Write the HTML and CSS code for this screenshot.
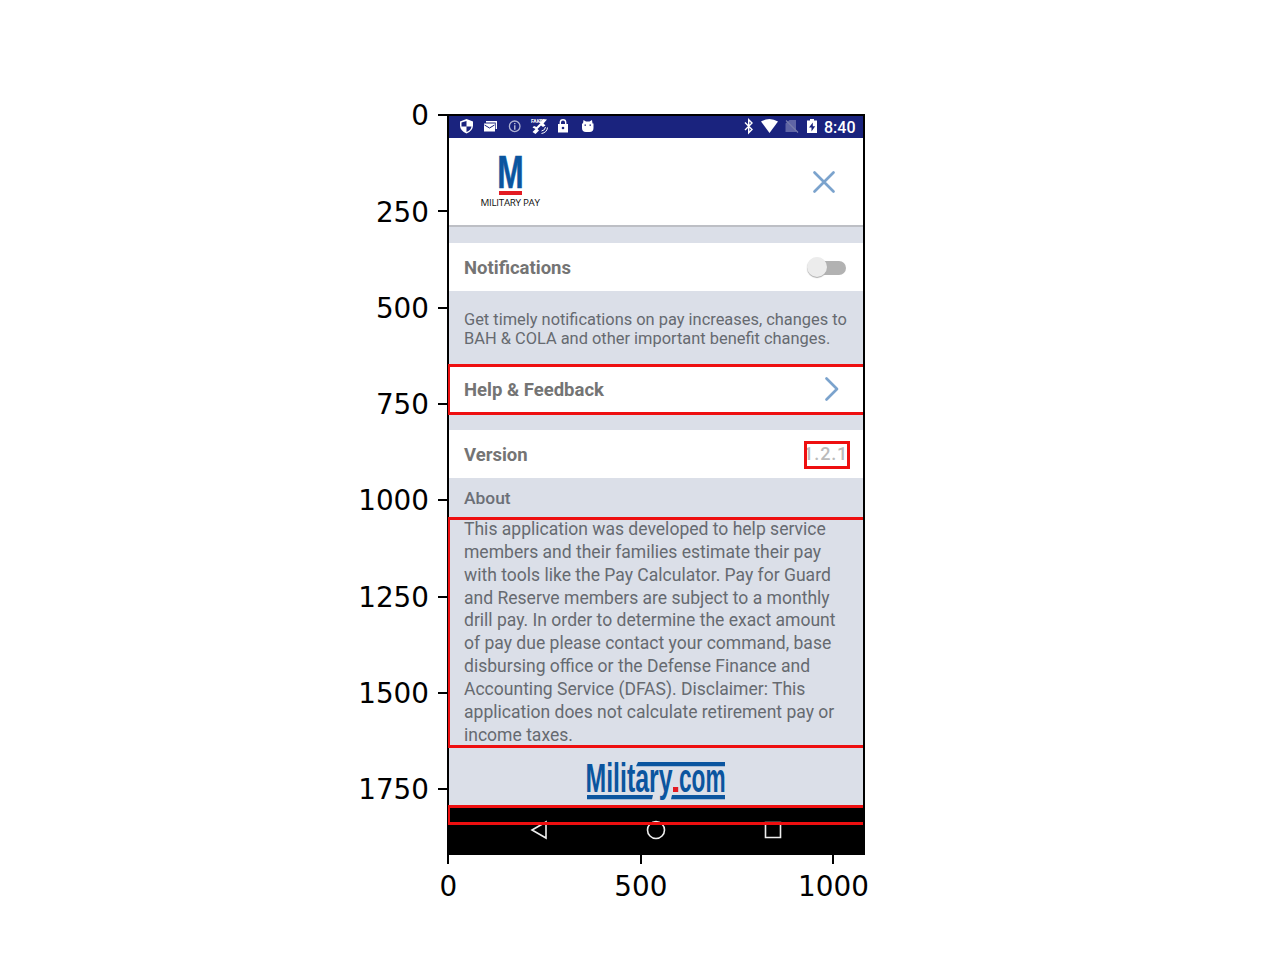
FILE: index.html
```html
<!DOCTYPE html>
<html lang="en">
<head>
<meta charset="utf-8">
<title>Military Pay</title>
<link rel="stylesheet" href="styles.css">
</head>
<body>
<main class="figure">
  <div class="plot">
    <div class="y-axis">
      <div class="y-tick"><span>0</span></div><div class="y-tick"><span>250</span></div><div class="y-tick"><span>500</span></div><div class="y-tick"><span>750</span></div><div class="y-tick"><span>1000</span></div><div class="y-tick"><span>1250</span></div><div class="y-tick"><span>1500</span></div><div class="y-tick"><span>1750</span></div>
    </div>
    <div class="phone">
      <div class="status">
        <svg width="150" height="22" viewBox="449 116 150 22" fill="#fff">
          <path d="M466.500 119l6.500 2.500v4q0 5-6.500 8-6.500-3-6.500-8v-4z"/>
          <path d="M466.500 121v5.500h-5v-4zM466.500 126.500h5q-.5 3.500-5 5.500z" fill="#1a237e"/>
          <path d="M486 121h11v8h-1.300v-6.500H486zM484 123.500h11v8h-11z"/>
          <path d="M484.500 125l5 3 5-3" fill="none" stroke="#1a237e"/>
          <g opacity=".65"><circle cx="514.700" cy="126.300" r="5.300" fill="none" stroke="#fff" stroke-width="1.300"/><path d="M514 123h1.500v1.300H514zM514 125.300h1.500v4.400H514z"/></g>
          <text class="fake" x="531" y="122.500">FAKE</text>
          <path d="M541 121.500l2-2.500 4 .5-3.500 4 2 2-2.500 1.500-2-1.500-3.500 3.500 1.500 1.500-3.500 3.500-3-2 3-3-3-1.500 1.500-1.500 2.500 1 4-4-2-1.500z"/>
          <path d="M541.500 131q3.500-.5 4-4M541.500 133.500q5.500-1 6-6" fill="none" stroke="#fff" stroke-width="1"/>
          <path d="M558 124h10v8.500h-10z"/><path d="M560.300 124v-1.500a2.700 2.700 0 0 1 5.400 0v1.500" fill="none" stroke="#fff" stroke-width="1.400"/><circle cx="563" cy="128" r="1.300" fill="#1a237e"/>
          <path d="M582 123.500h1l.5-3.500 2.500 1.500h3.500l2.500-1.500.500 3.500h1v4.500q0 4-4 4h-3.500q-4 0-4-4z"/><path d="M584.500 124.500h1.500v1.300h-1.500zM589.500 124.500h1.500v1.300h-1.500z" fill="#1a237e"/>
        </svg>
        <svg width="120" height="22" viewBox="743 116 120 22" fill="#fff">
          <path d="M745 122.500l7 7-3.300 3.300v-13l3.300 3.300-7 7" fill="none" stroke="#fff" stroke-width="1.400"/>
          <path d="M761 121.500q8.500-5 17 0L769.500 133z"/>
          <path d="M785.500 132v-8.500l4-3.500h6.500v12z" opacity=".3"/><path d="M786 120.500l12 12" stroke="#777cac" stroke-width="1.200"/>
          <path d="M807 120.500h3V119h4v1.500h3v12.500h-10z"/><path d="M812.800 122.500l-3.800 5h2.500v4l3.700-5.200h-2.400z" fill="#1a237e"/>
          <text class="clock" x="824" y="132.500" textLength="31.500">8:40</text>
        </svg>
      </div>
      <header class="head">
        <svg class="logo" width="62" height="56" viewBox="480 154 62 56">
          <text class="big-m" x="497.300" y="188" textLength="26.400" lengthAdjust="spacingAndGlyphs">M</text>
          <path d="M499 191h23v4h-23z" fill="#e31b23"/>
          <text class="logo-name" x="480.500" y="206" textLength="59.500">MILITARY PAY</text>
        </svg>
        <svg class="close" width="26" height="26" viewBox="0 0 26 26"><path d="M3.500 3.500l19 19M22.500 3.500l-19 19" class="stroke-blue"/></svg>
      </header>
      <section class="row">
        <span class="label">Notifications</span>
        <span class="switch"><i class="knob"></i></span>
      </section>
      <p class="hint">Get timely notifications on pay increases, changes to<br>BAH &amp; COLA and other important benefit changes.</p>
      <section class="row help">
        <span class="label">Help &amp; Feedback</span>
        <svg class="chev" width="16" height="26" viewBox="0 0 16 26"><path d="M2.500 2.500l10.500 10.500-10.500 10.500" class="stroke-blue"/></svg>
      </section>
      <section class="row version">
        <span class="label">Version</span>
        <span class="number">1.2.1</span>
      </section>
      <h2 class="about">About</h2>
      <p class="copy">This application was developed to help service<br>members and their families estimate their pay<br>with tools like the Pay Calculator. Pay for Guard<br>and Reserve members are subject to a monthly<br>drill pay. In order to determine the exact amount<br>of pay due please contact your command, base<br>disbursing office or the Defense Finance and<br>Accounting Service (DFAS). Disclaimer: This<br>application does not calculate retirement pay or<br>income taxes.</p>
      <div class="brand">
        <svg class="logo" width="140" height="40" viewBox="586 760 140 40" fill="#0b559f">
          <path d="M638 762h87v4.200h-89zM587 795h66l-1 4.200h-65zM672 795h53v4.200h-54z"/>
          <text class="brand-text" x="585.500" y="791.500" textLength="87" lengthAdjust="spacingAndGlyphs">Military</text>
          <path d="M673 787h5.200v5H673z" fill="#e31b23"/>
          <text class="brand-text" x="679" y="791.500" textLength="46.500" lengthAdjust="spacingAndGlyphs">com</text>
        </svg>
      </div>
      <nav class="nav">
        <svg width="20" height="20" viewBox="0 0 20 20"><path d="M17 2v16L3 10z"/></svg>
        <svg width="20" height="20" viewBox="0 0 20 20"><circle cx="10" cy="10" r="8.500"/></svg>
        <svg width="20" height="20" viewBox="0 0 20 20"><path d="M2.500 2.500h15v15h-15z"/></svg>
      </nav>
      <i class="box box-help"></i><i class="box box-version"></i><i class="box box-copy"></i><i class="box box-nav"></i>
    </div>
  </div>
  <div class="x-axis"><div class="x-tick">0</div><div class="x-tick">500</div><div class="x-tick">1000</div></div>
</main>
</body>
</html>
```
FILE: styles.css
```css
* { box-sizing: border-box; }
body { margin: 0; background: #fff; font-family: Roboto, sans-serif; }
svg { display: block; flex: none; }
.figure { width: 1280px; height: 960px; overflow: hidden; }
.plot { display: flex; height: 855px; }
.y-axis { width: 447px; padding-top: 67px; flex: none; }
.y-tick { height: 96.3px; display: flex; align-items: center; justify-content: flex-end; gap: 9px; font: 27.8px/1 "DejaVu Sans", sans-serif; }
.y-tick span { padding-top: 2px; }
.y-tick::after { content: ""; width: 9px; height: 2px; background: #000; }
.phone { position: relative; width: 418px; height: 741px; margin-top: 114px; border: 2px solid #000; background: #dbdfe8; display: flex; flex-direction: column; }
.status { height: 22px; background: #1a237e; display: flex; justify-content: space-between; flex: none; }
.fake { font: bold 5px Roboto, sans-serif; }
.clock { font: 500 16px Roboto, sans-serif; }
.head { height: 89px; flex: none; background: #fff; border-bottom: 2px solid #bdbfc5; padding: 16px 26px 0 31px; display: flex; justify-content: space-between; }
.logo { overflow: visible; }
.close { margin-top: 15px; }
.big-m { font: bold 46.500px "Liberation Sans", sans-serif; fill: #0b559f; stroke: #0b559f; stroke-width: .6; }
.logo-name { font: 9.800px "Open Sans", sans-serif; fill: #111; }
.brand-text { font: bold 41px "Liberation Sans", sans-serif; }
.stroke-blue { fill: none; stroke: #7ba3cd; stroke-width: 2.700; stroke-linecap: round; stroke-linejoin: round; }
.row { height: 48px; margin-top: 16px; flex: none; background: #fff; padding: 0 17px 0 15px; display: flex; align-items: center; justify-content: space-between; }
.label { font-size: 18.500px; font-weight: 700; color: #747474; padding-top: 2px; }
.switch { position: relative; width: 37px; height: 14px; margin-top: 1px; border-radius: 7px; background: #b2b2b2; }
.knob { position: absolute; left: -2px; top: -4px; width: 20px; height: 20px; border-radius: 50%; background: #ececec; box-shadow: 0 1px 1px #aaa; }
.hint { margin: 0; height: 74px; padding: 19px 0 0 15px; font-size: 16.420px; line-height: 19px; color: #666a70; white-space: nowrap; flex: none; }
.help { margin-top: 0; height: 49px; padding-right: 23px; }
.help .label { padding-top: 0; }
.chev { margin-bottom: 2px; }
.version { height: 48px; }
.number { font-size: 18px; font-weight: 500; color: #bbb; letter-spacing: .8px; margin-right: -2px; padding-bottom: 1px; }
.about { margin: 0; height: 40px; padding-left: 15px; font-size: 17.400px; font-weight: 500; line-height: 40px; color: #6b6f77; flex: none; }
.copy { margin: 0; height: 228px; padding-left: 15px; font-size: 17.550px; line-height: 22.850px; color: #666a70; white-space: nowrap; flex: none; }
.brand { height: 61px; padding-top: 14px; display: flex; justify-content: center; flex: none; }
.nav { height: 46px; background: #000; display: flex; justify-content: space-between; padding: 13px 80px 0; flex: none; }
.nav path, .nav circle { fill: none; stroke: #eee; stroke-width: 1.600; }
.box { position: absolute; border: 3px solid #ee0f10; }
.box-help { left: -1px; top: 248px; width: 415px; height: 51px; border-width: 3px 0 3px 2px; }
.box-version { left: 355px; top: 325px; width: 46px; height: 28px; }
.box-copy { left: -1px; top: 401px; width: 415px; height: 231px; border-width: 3px 0 3px 2px; }
.box-nav { left: -1px; top: 689px; width: 415px; height: 20px; border-width: 3px 0 3px 2px; }
.x-axis { display: flex; margin-left: 352px; }
.x-tick { width: 192.600px; flex: none; display: flex; flex-direction: column; align-items: center; gap: 9px; font: 27.800px/1 "DejaVu Sans", sans-serif; }
.x-tick::before { content: ""; width: 2px; height: 9px; background: #000; }
```
